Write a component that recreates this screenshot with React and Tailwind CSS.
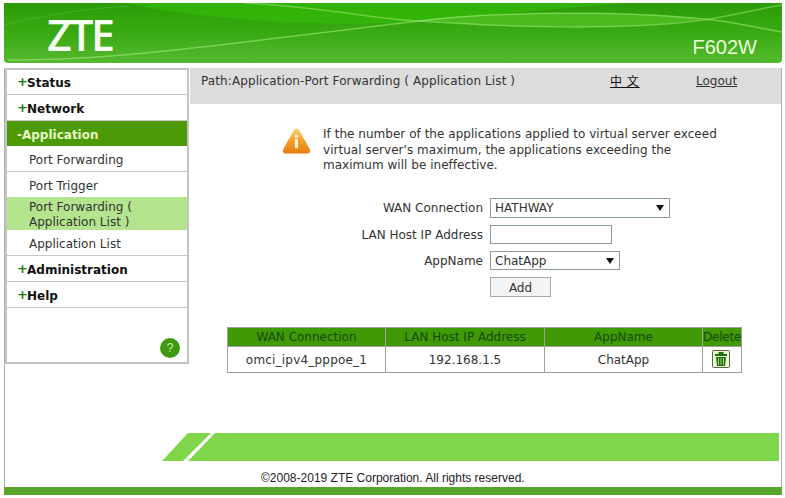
import React from "react";

const font = "font-['DejaVu_Sans',sans-serif]";

function MenuHead({ label, short }) {
    return (
        <div className={`${short ? "h-[25px]" : "h-[26px]"} border-b border-[#c8c8c8] pl-[10px] pt-[2px] flex items-center text-[12px] font-bold text-[#111]`}>
            <span className="text-[#1a7a10] text-[13px] w-[10px] -mt-[2px]">+</span>{label}
        </div>
    );
}

function MenuItem({ label }) {
    return (
        <div className="h-[26px] border-b border-[#c8c8c8] pl-[22px] pt-[2px] flex items-center text-[12px] text-[#333]">
            {label}
        </div>
    );
}

function Sidebar() {
    return (
        <div className="w-[184px] h-[296px] border-2 border-[#c4c4c4] flex flex-col relative">
            <MenuHead label="Status" short />
            <MenuHead label="Network" />
            <div className="h-[25px] bg-[#4b9a06] pl-[10px] pt-[2px] flex items-center text-[12px] font-bold text-[#e6f7c8]">-Application</div>
            <MenuItem label="Port Forwarding" />
            <div className="h-[25px] pl-[22px] pt-[2px] flex items-center text-[12px] text-[#333]">Port Trigger</div>
            <div className="h-[33px] bg-[#b4e48e] pl-[22px] pt-[2px] flex items-center text-[12px] leading-[15px] text-[#333]">
                <span>Port Forwarding (<br />Application List )</span>
            </div>
            <MenuItem label="Application List" />
            <MenuHead label="Administration" />
            <MenuHead label="Help" />
            <div className="absolute right-[7px] bottom-[4px] w-[20px] h-[20px] rounded-full bg-[#3f9a10] text-[#cfeeb0] text-[12px] font-['Liberation_Sans',sans-serif] flex items-center justify-center">?</div>
        </div>
    );
}

function SelectBox({ width, height, value }) {
    return (
        <div className={`relative ${width}`}>
            <select defaultValue={value} className={`block w-full ${height} appearance-none border border-[#8a9aa5] bg-white pl-[4px] text-[12px] text-[#333] outline-none`}>
                <option>{value}</option>
            </select>
            <svg className="absolute right-[6px] top-[6px]" width="8" height="7" viewBox="0 0 8 7">
                <path d="M0 1h8L4 7z" fill="#111" />
            </svg>
        </div>
    );
}

function FormRow({ label, children }) {
    return (
        <div className="flex items-center">
            <div className="w-[300px] pr-[7px] pt-[1px] text-right text-[12px] leading-[14px] text-[#333]">{label}</div>
            {children}
        </div>
    );
}

function WarningIcon() {
    return (
        <svg width="29" height="28" viewBox="0 0 30 28">
            <defs>
                <linearGradient id="warn" x1="0" y1="0" x2="0" y2="1">
                    <stop offset="0" stopColor="#fdd27a" />
                    <stop offset="0.55" stopColor="#f59a24" />
                    <stop offset="1" stopColor="#e67c10" />
                </linearGradient>
            </defs>
            <path d="M15 1c1.4 0 2.2.8 3 2.2l10.6 19c1.2 2.4.2 4.8-2.6 4.8H4c-2.8 0-3.8-2.4-2.6-4.8L12 3.2C12.8 1.8 13.6 1 15 1z" fill="url(#warn)" />
            <circle cx="15" cy="9" r="1.7" fill="#fff3d8" />
            <rect x="13.4" y="12" width="3.2" height="9.5" fill="#fff3d8" />
        </svg>
    );
}

function Header() {
    return (
        <div className="relative ml-[4px] w-[778px] h-[60px] rounded-b-[4px] overflow-hidden bg-gradient-to-b from-[#2b9c05] via-[#38aa12] to-[#55b82e] text-white">
            {/* waves */}
            <svg className="absolute inset-0" width="778" height="60" viewBox="0 0 778 60" fill="none">
                <path d="M120 0H620L415 18C330 24 220 20 120 0z" fill="#35c006" opacity="0.6" />
                <path d="M415 17C500 8 620 8 700 16C620 28 500 26 415 17z" fill="#6fdc3c" opacity="0.4" />
                <path d="M0 22C40 12 80 6 125 3" stroke="#7ed85a" strokeWidth="1" opacity="0.3" />
                <path d="M240 0C320 4 370 16 415 18C500 24 620 28 700 17C730 12 755 6 778 2" stroke="#a4ec7c" strokeWidth="1.5" opacity="0.5" />
                <path d="M4 57C110 58 230 40 415 18C500 8 620 8 700 16C730 19 755 25 778 29" stroke="#a4ec7c" strokeWidth="1.5" opacity="0.55" />
            </svg>
            <div className="absolute left-[43px] top-[6px] font-['Open_Sans',sans-serif] font-semibold tracking-[-2.5px] text-[43px] leading-[52px] text-[#f6fff2]">ZTE</div>
            <div className="absolute right-[25px] top-[32px] font-['Liberation_Sans',sans-serif] text-[20px] leading-[24px] text-[#eaffdc]">F602W</div>
        </div>
    );
}

export default function App() {
    return (
        <div className={`w-[785px] h-[498px] bg-white pt-[3px] overflow-hidden ${font}`}>
            <Header />
            <div className="w-[778px] ml-[4px] mt-[5px] h-[419px] border-x border-[#b0b0b0]">
                <div className="flex h-[365px]">
                    <Sidebar />
                    <div className="flex-1 ml-[1px]">
                        <div className="h-[36px] bg-[#dcdcdc] flex pl-[11px] pt-[4px] text-[12px] text-[#333]">
                            <div className="w-[409px] tracking-[0.1px]">Path:Application-Port Forwarding ( Application List )</div>
                            <div className="w-[86px] underline text-[#111] tracking-[1px] font-['Noto_Sans_CJK_SC',sans-serif]">中 文</div>
                            <div className="underline text-[#333]">Logout</div>
                        </div>

                        <div className="flex mt-[23px] ml-[92px]">
                            <WarningIcon />
                            <div className="ml-[12px] tracking-[0.03px] text-[12px] leading-[15.5px] text-[#333]">
                                If the number of the applications applied to virtual server exceed<br />
                                virtual server's maximum, the applications exceeding the<br />
                                maximum will be ineffective.
                            </div>
                        </div>

                        <div className="mt-[24px] flex flex-col gap-[7px]">
                            <FormRow label="WAN Connection"><SelectBox width="w-[180px]" height="h-[20px]" value="HATHWAY" /></FormRow>
                            <FormRow label="LAN Host IP Address">
                                <input className="block w-[122px] h-[19px] border border-[#8a9aa5] bg-white outline-none" />
                            </FormRow>
                            <FormRow label="AppName"><SelectBox width="w-[130px]" height="h-[19px]" value="ChatApp" /></FormRow>
                            <FormRow label="">
                                <button className="block w-[61px] h-[20px] pt-[1px] border border-[#a8a8a8] bg-[#f4f4f4] text-[12px] text-[#333]">Add</button>
                            </FormRow>
                        </div>

                        <table className="mt-[30px] ml-[37px] w-[515px] table-fixed border-collapse text-[12px] text-center text-[#333]">
                            <thead>
                                <tr className="h-[19px] bg-[#3f9a06] text-[#164a0c]">
                                    <th className="w-[158px] font-normal border border-[#a0a0a0]">WAN Connection</th>
                                    <th className="w-[159px] font-normal border border-[#a0a0a0]">LAN Host IP Address</th>
                                    <th className="w-[158px] font-normal border border-[#a0a0a0]">AppName</th>
                                    <th className="font-normal border border-[#a0a0a0] tracking-[-0.2px]">Delete</th>
                                </tr>
                            </thead>
                            <tbody>
                                <tr className="h-[26px]">
                                    <td className="border border-[#a0a0a0] tracking-[0.2px] pt-[1px]">omci_ipv4_pppoe_1</td>
                                    <td className="border border-[#a0a0a0] pt-[1px]">192.168.1.5</td>
                                    <td className="border border-[#a0a0a0] pt-[1px]">ChatApp</td>
                                    <td className="border border-[#a0a0a0]">
                                        <svg className="mx-auto -translate-x-[1px]" width="18" height="18" viewBox="0 0 18 18">
                                            <rect x="0.5" y="0.5" width="17" height="17" rx="1" fill="#eef4dc" stroke="#5a6a40" />
                                            <rect x="6.5" y="2" width="5" height="2" fill="#1f6e04" />
                                            <rect x="3" y="4" width="12" height="2" fill="#1f6e04" />
                                            <path d="M4 7h10l-1 9H5z" fill="#1f6e04" />
                                            <path d="M6.5 8v7M9 8v7M11.5 8v7" stroke="#a9d884" strokeWidth="1" />
                                        </svg>
                                    </td>
                                </tr>
                            </tbody>
                        </table>
                    </div>
                </div>

                <svg className="block ml-[157px]" width="617" height="28" viewBox="0 0 617 28">
                    <path d="M26 0H617V28H0z" fill="#80d64b" />
                    <path d="M49 0H53L26 28H21z" fill="#fff" />
                </svg>
                <div className="h-[26px] pl-[256px] pt-[10px] font-['Liberation_Sans',sans-serif] text-[12px] leading-[14px] text-[#222]">©2008-2019 ZTE Corporation. All rights reserved.</div>
            </div>
            <div className="w-[778px] ml-[4px] h-[8px] bg-[#5aa52c]"></div>
        </div>
    );
}
